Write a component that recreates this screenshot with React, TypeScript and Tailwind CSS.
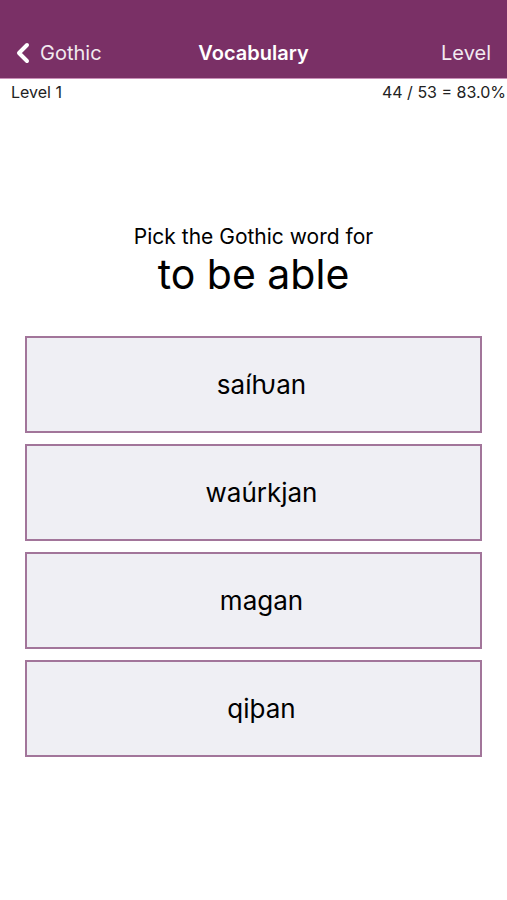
import { ChevronLeft } from 'lucide-react';

const choices = ['saíƕan', 'waúrkjan', 'magan', 'qiþan'];

export default function App() {
  return (
    <main
      className="min-h-[900px] w-[507px] bg-white text-black"
      style={{ fontFamily: 'Inter, "Noto Sans", "Liberation Sans", sans-serif' }}
    >
      {/* NAV BAR */}
      <header className="h-[79px] bg-[#7a3066] border-b border-[#c98fb8] flex items-end pb-[9px] px-[14px] text-white">
        <div className="relative flex w-full items-center">
          <div className="flex items-center gap-[1px]">
            <ChevronLeft size={32} strokeWidth={3} className="-ml-[7px]" />
            <span className="text-[20px] opacity-90">Gothic</span>
          </div>
          <span className="absolute left-1/2 -translate-x-1/2 text-[20px] font-semibold">Vocabulary</span>
          <span className="ml-auto text-[20px] opacity-90 pr-[2px]">Level</span>
        </div>
      </header>

      {/* STATUS ROW */}
      <div className="flex justify-between pl-[11px] pr-[1px] pt-[1px] text-[16px] text-[#222]">
        <span>Level 1</span>
        <span>44 / 53 = 83.0%</span>
      </div>

      {/* QUESTION */}
      <div className="mt-[120px] flex flex-col items-center">
        <p className="text-[21px] leading-[26px]">Pick the Gothic word for</p>
        <p className="text-[41px] leading-[48px]">to be able</p>
      </div>

      {/* CHOICES */}
      <div className="mt-[38px] px-[25px] flex flex-col gap-[11px]">
        {choices.map((c) => (
          <button
            key={c}
            className="h-[97px] w-[457px] border-2 border-[#a2759a] bg-[#efeff4] pl-[16px] text-[26px] flex items-center justify-center"
          >
            {c}
          </button>
        ))}
      </div>
    </main>
  );
}
